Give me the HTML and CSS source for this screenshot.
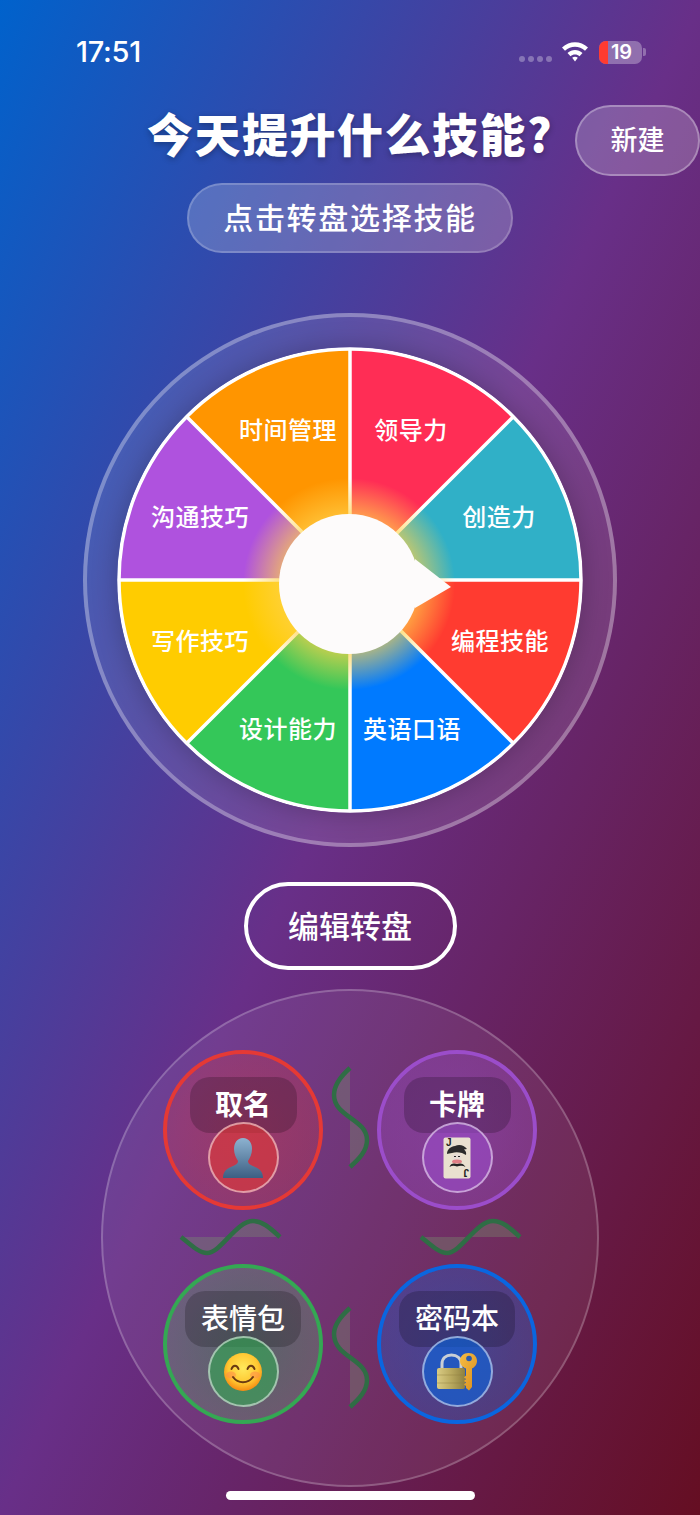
FILE: index.html
```html
<!DOCTYPE html>
<html lang="zh-CN">
<head>
    <meta charset="UTF-8">
    <title>技能转盘</title>
    <link rel="stylesheet" href="styles.css">
</head>

<body>
<div class="screen">
    <div class="status">
        <span class="time">17:51</span>
        <div class="status-right">
            <div class="dots"><i></i><i></i><i></i><i></i></div>
            <svg class="wifi" width="28" height="22" viewBox="0 0 28 22">
                <path d="M1 7.5C8.5 .5 19.500 .5 27 7.500L24 10.700C18.200 5.500 9.800 5.500 4 10.700Z" fill="#fff"/>
                <path d="M6.500 13C10.900 9.100 17.100 9.100 21.500 13L18.500 16.200C16 14 12 14 9.500 16.200Z" fill="#fff"/>
                <path d="M11.200 17.800C13 16.400 15 16.400 16.800 17.800L14 21.500Z" fill="#fff"/>
            </svg>
            <div class="battery"><i class="level"></i><span>19</span></div>
            <i class="nub"></i>
        </div>
    </div>

    <div class="title-row">
        <h1 class="title">今天提升什么技能?</h1>
        <a class="new-btn">新建</a>
    </div>
    <div class="subtitle">点击转盘选择技能</div>

    <div class="ring">
        <svg class="wheel" width="466" height="466" viewBox="0 0 466 466">
            <defs>
                <radialGradient id="glow" gradientUnits="userSpaceOnUse" cx="232" cy="237" r="106">
                    <stop offset="0.660" stop-color="#ffd24a" stop-opacity="0.650"/>
                    <stop offset="1" stop-color="#ffd24a" stop-opacity="0"/>
                </radialGradient>
            </defs>
            <path d="M233 233L233 2A231 231 0 0 1 396.300 69.700Z" fill="#ff2d55"/>
            <path d="M233 233L396.300 69.700A231 231 0 0 1 464 233Z" fill="#30b0c7"/>
            <path d="M233 233L464 233A231 231 0 0 1 396.300 396.300Z" fill="#ff3b30"/>
            <path d="M233 233L396.300 396.300A231 231 0 0 1 233 464Z" fill="#007aff"/>
            <path d="M233 233L233 464A231 231 0 0 1 69.700 396.300Z" fill="#34c759"/>
            <path d="M233 233L69.700 396.300A231 231 0 0 1 2 233Z" fill="#ffcc00"/>
            <path d="M233 233L2 233A231 231 0 0 1 69.700 69.700Z" fill="#af52de"/>
            <path d="M233 233L69.700 69.700A231 231 0 0 1 233 2Z" fill="#ff9500"/>
            <g class="spokes">
                <path d="M233 2V464M2 233H464M69.700 69.700L396.300 396.300M396.300 69.700L69.700 396.300"/>
                <circle cx="233" cy="233" r="231"/>
            </g>
            <circle cx="232" cy="237" r="106" fill="url(#glow)"/>
            <g class="labels">
                <text x="171" y="81">时间管理</text>
                <text x="294" y="81">领导力</text>
                <text x="382" y="168">创造力</text>
                <text x="383" y="292">编程技能</text>
                <text x="295" y="380">英语口语</text>
                <text x="171" y="380">设计能力</text>
                <text x="83" y="292">写作技巧</text>
                <text x="83" y="168">沟通技巧</text>
            </g>
            <circle cx="232" cy="237" r="70" fill="#fdfbfb"/>
            <path d="M298 212L334 240L298 261Z" fill="#fdfbfb"/>
        </svg>
    </div>

    <a class="edit-btn">编辑转盘</a>

    <div class="disc">
        <svg class="waves" width="498" height="498" viewBox="0 0 498 498">
            <path d="M249 79C240 87 233 97 233 106C233 128 266 130 266 151C266 162 258 170 249 178"/>
            <path d="M249 319C240 327 233 335 233 345C233 368 266 370 266 391C266 402 258 410 249 418"/>
            <path d="M80 248C90 256 98 264 106 264C120 264 135 232 152 232C162 232 170 240 179 248"/>
            <path d="M320 248C330 256 338 264 346 264C360 264 375 232 392 232C402 232 410 240 419 248"/>
        </svg>
        <div class="nodes">
            <div class="node red">
                <div class="node-label">取名</div>
                <div class="node-icon">
                    <svg width="40" height="40" viewBox="0 0 40 40">
                        <defs>
                            <linearGradient id="userFill" x1="0" y1="0" x2="0" y2="1">
                                <stop offset="0" stop-color="#8db2d0"/>
                                <stop offset="1" stop-color="#3c5f83"/>
                            </linearGradient>
                        </defs>
                        <path d="M20 0C26 0 29 5 29 11C29 16 27 20 25 23C25 26 28 27 32 29C37 31 40 34 40 40H0C0 34 3 31 8 29C12 27 15 26 15 23C13 20 11 16 11 11C11 5 14 0 20 0Z" fill="url(#userFill)"/>
                    </svg>
                </div>
            </div>
            <div class="node purple">
                <div class="node-label">卡牌</div>
                <div class="node-icon">
                    <svg width="28" height="42" viewBox="0 0 28 42">
                        <rect x="0.500" y="0.500" width="27" height="41" rx="2" fill="#e9e0cf"/>
                        <text class="card-letter" x="3" y="9">J</text>
                        <text class="card-letter flip" x="-26" y="-32">J</text>
                        <path d="M4 17C4 12 8 9.500 12 9C16 7 21 8 24 12L21 12.500C23 14 23.500 16 23 18L19 16C15 15 12 15 9 16C7 16 5 17 4 17Z" fill="#2b2b2b"/>
                        <ellipse cx="14" cy="20" rx="4.500" ry="3.500" fill="#e6dcd4"/>
                        <path d="M11 19.500H13M15 19.500H17" stroke="#222" stroke-width="1.200"/>
                        <ellipse cx="14" cy="24.500" rx="5" ry="2" fill="#e07f86"/>
                        <path d="M6.500 30C7.500 26 11 26 14 27C17 26 20.500 26 22.500 30C20 28.500 17 28.500 14 29.500C11 28.500 9 28.500 6.500 30Z" fill="#222"/>
                    </svg>
                </div>
            </div>
            <div class="node green">
                <div class="node-label">表情包</div>
                <div class="node-icon">
                    <svg width="38" height="38" viewBox="0 0 38 38">
                        <defs>
                            <radialGradient id="faceFill" cx="0.500" cy="0.400" r="0.600">
                                <stop offset="0" stop-color="#ffe95c"/>
                                <stop offset="0.650" stop-color="#ffc832"/>
                                <stop offset="1" stop-color="#f58a12"/>
                            </radialGradient>
                        </defs>
                        <circle cx="19" cy="19" r="19" fill="url(#faceFill)"/>
                        <ellipse cx="7" cy="22" rx="5" ry="3.500" fill="#ff8a4a" opacity="0.550"/>
                        <ellipse cx="31" cy="22" rx="5" ry="3.500" fill="#ff8a4a" opacity="0.550"/>
                        <path d="M7.500 16C9 11.500 13 11.500 14.500 16M23.500 16C25 11.500 29 11.500 30.500 16M9 24C14 31 24 31 29 24" fill="none" stroke="#6b3a12" stroke-width="2" stroke-linecap="round"/>
                    </svg>
                </div>
            </div>
            <div class="node blue">
                <div class="node-label">密码本</div>
                <div class="node-icon">
                    <svg width="40" height="38" viewBox="0 0 40 38">
                        <defs>
                            <linearGradient id="lockFill" x1="0" y1="0" x2="1" y2="0">
                                <stop offset="0" stop-color="#d9cb84"/>
                                <stop offset="0.500" stop-color="#b9a95f"/>
                                <stop offset="1" stop-color="#8f8040"/>
                            </linearGradient>
                            <linearGradient id="keyFill" x1="0" y1="0" x2="1" y2="1">
                                <stop offset="0" stop-color="#f6bd45"/>
                                <stop offset="1" stop-color="#d98d1c"/>
                            </linearGradient>
                        </defs>
                        <path d="M5 17V11C5 5 9 2 14.500 2C20 2 24 5 24 11V17" fill="none" stroke="#c9cfd6" stroke-width="3"/>
                        <rect x="0" y="15" width="28" height="21" rx="2" fill="url(#lockFill)"/>
                        <path d="M0 22H28M0 30H28" stroke="#8f8040" stroke-width="0.700" opacity="0.600"/>
                        <path d="M31.500 0C36.500 0 40 3.500 40 8C40 11.500 37.500 14.500 35 15.500V34L32 37.500L29 35V33L27 31.500L29 29.500L27 28L29 26L27 24.500L29 22.500V15.500C25.500 14 23 11.500 23 8C23 3.500 26.500 0 31.500 0Z" fill="url(#keyFill)"/>
                        <circle cx="32" cy="5.500" r="2.800" fill="#2a5ab0"/>
                    </svg>
                </div>
            </div>
        </div>
    </div>

    <div class="home-bar"></div>
</div>
</body>
</html>
```

FILE: styles.css
```css
*{
    padding: 0;
    margin: 0;
    box-sizing: border-box;
}
html,body{
    width: 700px;
    height: 1515px;
    overflow: hidden;
}
body{
    font-family: "Noto Sans CJK SC", "Noto Sans", sans-serif;
    color: #fff;
}
.screen{
    width: 700px;
    height: 1515px;
    display: flex;
    flex-direction: column;
    align-items: center;
    background: linear-gradient(to bottom right, #0062cc 0%, #682f88 50%, #650e22 100%);
}

/* status bar */
.status{
    width: 100%;
    height: 105px;
    padding: 36px 54px 0 76px;
    display: flex;
    justify-content: space-between;
    align-items: flex-start;
}
.time{
    font-family: Inter, "Liberation Sans", sans-serif;
    font-size: 29px;
    font-weight: 500;
    line-height: 32px;
    letter-spacing: -.3px;
}
.status-right{
    display: flex;
    align-items: center;
    height: 32px;
}
.dots{
    display: flex;
    gap: 3px;
    margin: 14px 9px 0 0;
}
.dots i{
    width: 6px;
    height: 6px;
    border-radius: 50%;
    background-color: rgba(255,255,255,.3);
}
.wifi{
    margin: -3px 10px 0 0;
}
.battery{
    width: 43px;
    height: 23px;
    border-radius: 7px;
    overflow: hidden;
    background-color: rgba(255,255,255,.3);
    position: relative;
    text-align: center;
    font-family: Inter, "Liberation Sans", sans-serif;
    font-size: 20px;
    font-weight: 600;
    line-height: 23px;
    padding-left: 2px;
}
.battery .level{
    position: absolute;
    left: 0;
    top: 0;
    width: 9px;
    height: 100%;
    background-color: #ff3b30;
}
.battery span{
    position: relative;
}
.nub{
    width: 3px;
    height: 8px;
    margin-left: 1px;
    border-radius: 0 2px 2px 0;
    background-color: rgba(255,255,255,.3);
}

/* header */
.title-row{
    width: 100%;
    height: 71px;
    display: grid;
    grid-template-columns: 1fr auto 1fr;
    align-items: center;
}
.title{
    grid-column: 2;
    font-size: 46px;
    font-weight: 900;
    line-height: 60px;
    letter-spacing: 1.500px;
    margin: -3px 0 14px;
    text-shadow: 0 2px 6px rgba(0,0,0,.3);
}
.new-btn{
    grid-column: 3;
    justify-self: end;
    width: 125px;
    height: 71px;
    padding-bottom: 4px;
    border: 2px solid rgba(255,255,255,.3);
    border-radius: 36px;
    background-color: rgba(255,255,255,.2);
    font-size: 27px;
    font-weight: 500;
    display: flex;
    align-items: center;
    justify-content: center;
}
.subtitle{
    width: 326px;
    height: 70px;
    margin-top: 7px;
    padding-bottom: 4px;
    border: 2px solid rgba(255,255,255,.2);
    border-radius: 35px;
    background-color: rgba(255,255,255,.2);
    font-size: 30px;
    font-weight: 500;
    letter-spacing: 1.700px;
    display: flex;
    align-items: center;
    justify-content: center;
}

/* wheel */
.ring{
    width: 534px;
    height: 534px;
    margin-top: 60px;
    border: 4px solid rgba(255,255,255,.3);
    border-radius: 50%;
    background-color: rgba(255,255,255,.1);
    display: flex;
    align-items: center;
    justify-content: center;
}
.wheel{
    flex: none;
    border-radius: 50%;
    box-shadow: 0 0 26px rgba(0,0,0,.22);
}
.spokes path,.spokes circle{
    fill: none;
    stroke: #fff;
    stroke-width: 3.500;
}
.labels text{
    fill: #fff;
    font-size: 24px;
    font-weight: 500;
    letter-spacing: 0.500px;
    text-anchor: middle;
    dominant-baseline: central;
}

.edit-btn{
    width: 213px;
    height: 88px;
    margin-top: 35px;
    padding-bottom: 4px;
    border: 4px solid #fff;
    border-radius: 44px;
    font-size: 31px;
    font-weight: 500;
    display: flex;
    align-items: center;
    justify-content: center;
}

/* bottom disc */
.disc{
    width: 498px;
    height: 498px;
    margin-top: 19px;
    padding-bottom: 2px;
    border: 2px solid rgba(255,255,255,.22);
    border-radius: 50%;
    background-color: rgba(255,255,255,.07);
    position: relative;
    display: flex;
    align-items: center;
    justify-content: center;
}
.waves{
    position: absolute;
    left: -2px;
    top: -2px;
}
.waves path{
    fill: rgba(120,150,110,.35);
    stroke: #2f6d45;
    stroke-width: 4.500;
}
.nodes{
    position: relative;
    display: grid;
    grid-template-columns: 160px 160px;
    grid-template-rows: 160px 160px;
    gap: 54px;
}
.node{
    border-width: 4px;
    border-style: solid;
    border-radius: 50%;
    padding-top: 23px;
    display: flex;
    flex-direction: column;
    align-items: center;
}
.node-label{
    min-width: 107px;
    height: 56px;
    padding: 0 16px;
    border-radius: 20px;
    background-color: rgba(0,0,0,.2);
    font-size: 28px;
    font-weight: 700;
    line-height: 52px;
    text-align: center;
}
.green .node-label,.blue .node-label{
    font-weight: 500;
}
.node-icon{
    width: 71px;
    height: 71px;
    margin-top: -11px;
    border: 2px solid rgba(255,255,255,.5);
    border-radius: 50%;
    flex: none;
    position: relative;
    display: flex;
    align-items: center;
    justify-content: center;
}
.card-letter{
    font-family: "Liberation Sans", sans-serif;
    font-size: 10px;
    font-weight: 700;
    fill: #222;
}
.card-letter.flip{
    transform: scale(-1,-1);
}
.node.red{
    border-color: #e53935;
    background: radial-gradient(circle, rgba(229,57,53,.35), rgba(229,57,53,.2));
}
.node.red .node-icon{
    background-color: rgba(229,57,53,.6);
}
.node.purple{
    border-color: #9b4dca;
    background: radial-gradient(circle, rgba(155,77,202,.45), rgba(155,77,202,.3));
}
.node.purple .node-icon{
    background-color: rgba(155,77,202,.6);
}
.node.green{
    border-color: #34a853;
    background: radial-gradient(circle, rgba(52,168,83,.4), rgba(120,170,120,.3));
}
.node.green .node-icon{
    background-color: rgba(52,168,83,.6);
}
.node.blue{
    border-color: #0a66e0;
    background: radial-gradient(circle, rgba(10,102,224,.4), rgba(10,102,224,.25));
}
.node.blue .node-icon{
    background-color: rgba(10,102,224,.6);
}

.home-bar{
    width: 249px;
    height: 9px;
    margin-top: 4px;
    border-radius: 5px;
    background-color: #fff;
}
```
